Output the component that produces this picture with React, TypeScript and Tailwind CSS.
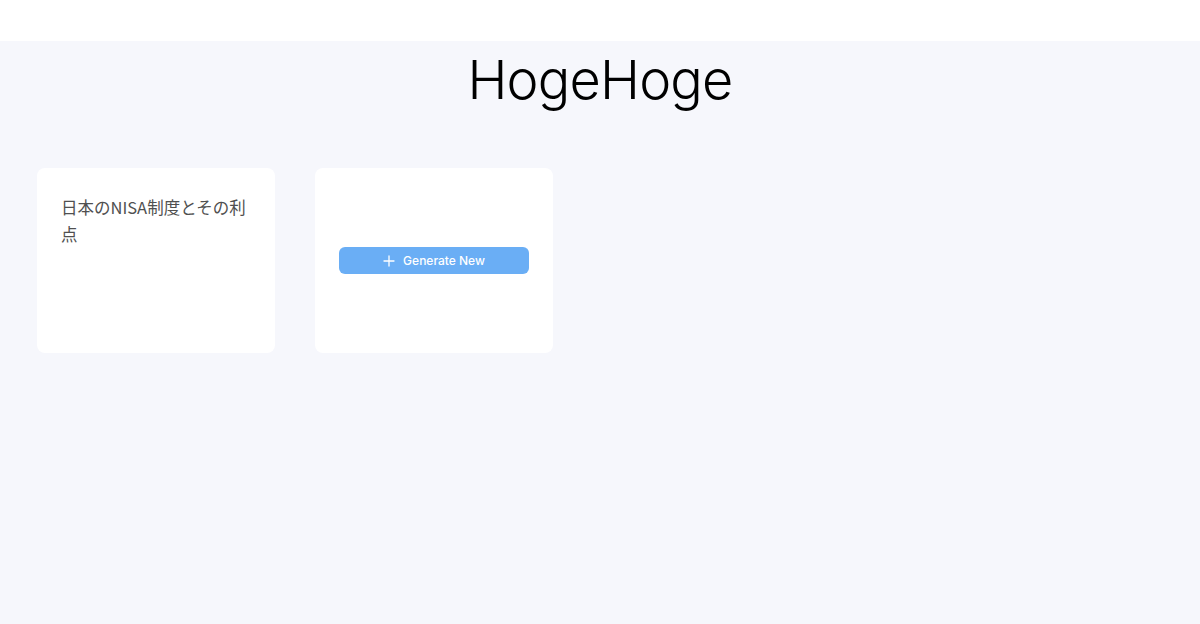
import type { FC } from "react";

const PlusIcon: FC = () => (
    <svg width="12" height="12" viewBox="0 0 12 12" fill="none" stroke="currentColor" strokeWidth="1.3" strokeLinecap="round">
        <path d="M6 1v10M1 6h10" />
    </svg>
);

const App: FC = () => {
    return (
        <div className="min-h-screen bg-[#f6f7fc] font-['Inter','Noto_Sans_CJK_JP',sans-serif]">

            {/* Top bar */}
            <div className="h-[41px] bg-white" />

            {/* Title */}
            <h1 className="mt-[6px] text-center text-[54px] font-light leading-[66px] tracking-[-0.8px] text-black">
                HogeHoge
            </h1>

            {/* Cards */}
            <div className="mt-[55px] flex gap-[40px] px-[37px]">

                <div className="h-[185px] w-[238px] rounded-lg bg-white px-6 pt-[26px]">
                    <p className="text-[16.5px] leading-[27px] text-[#505050] font-['Noto_Sans_CJK_JP',sans-serif]">
                        日本のNISA制度とその利点
                    </p>
                </div>

                <div className="flex h-[185px] w-[238px] items-center rounded-lg bg-white px-6">
                    <button className="flex h-[27px] w-full items-center justify-center gap-2 rounded-md bg-[#6aaef5] text-[12px] font-medium text-white">
                        <PlusIcon />
                        Generate New
                    </button>
                </div>

            </div>

        </div>
    );
};

export default App;
